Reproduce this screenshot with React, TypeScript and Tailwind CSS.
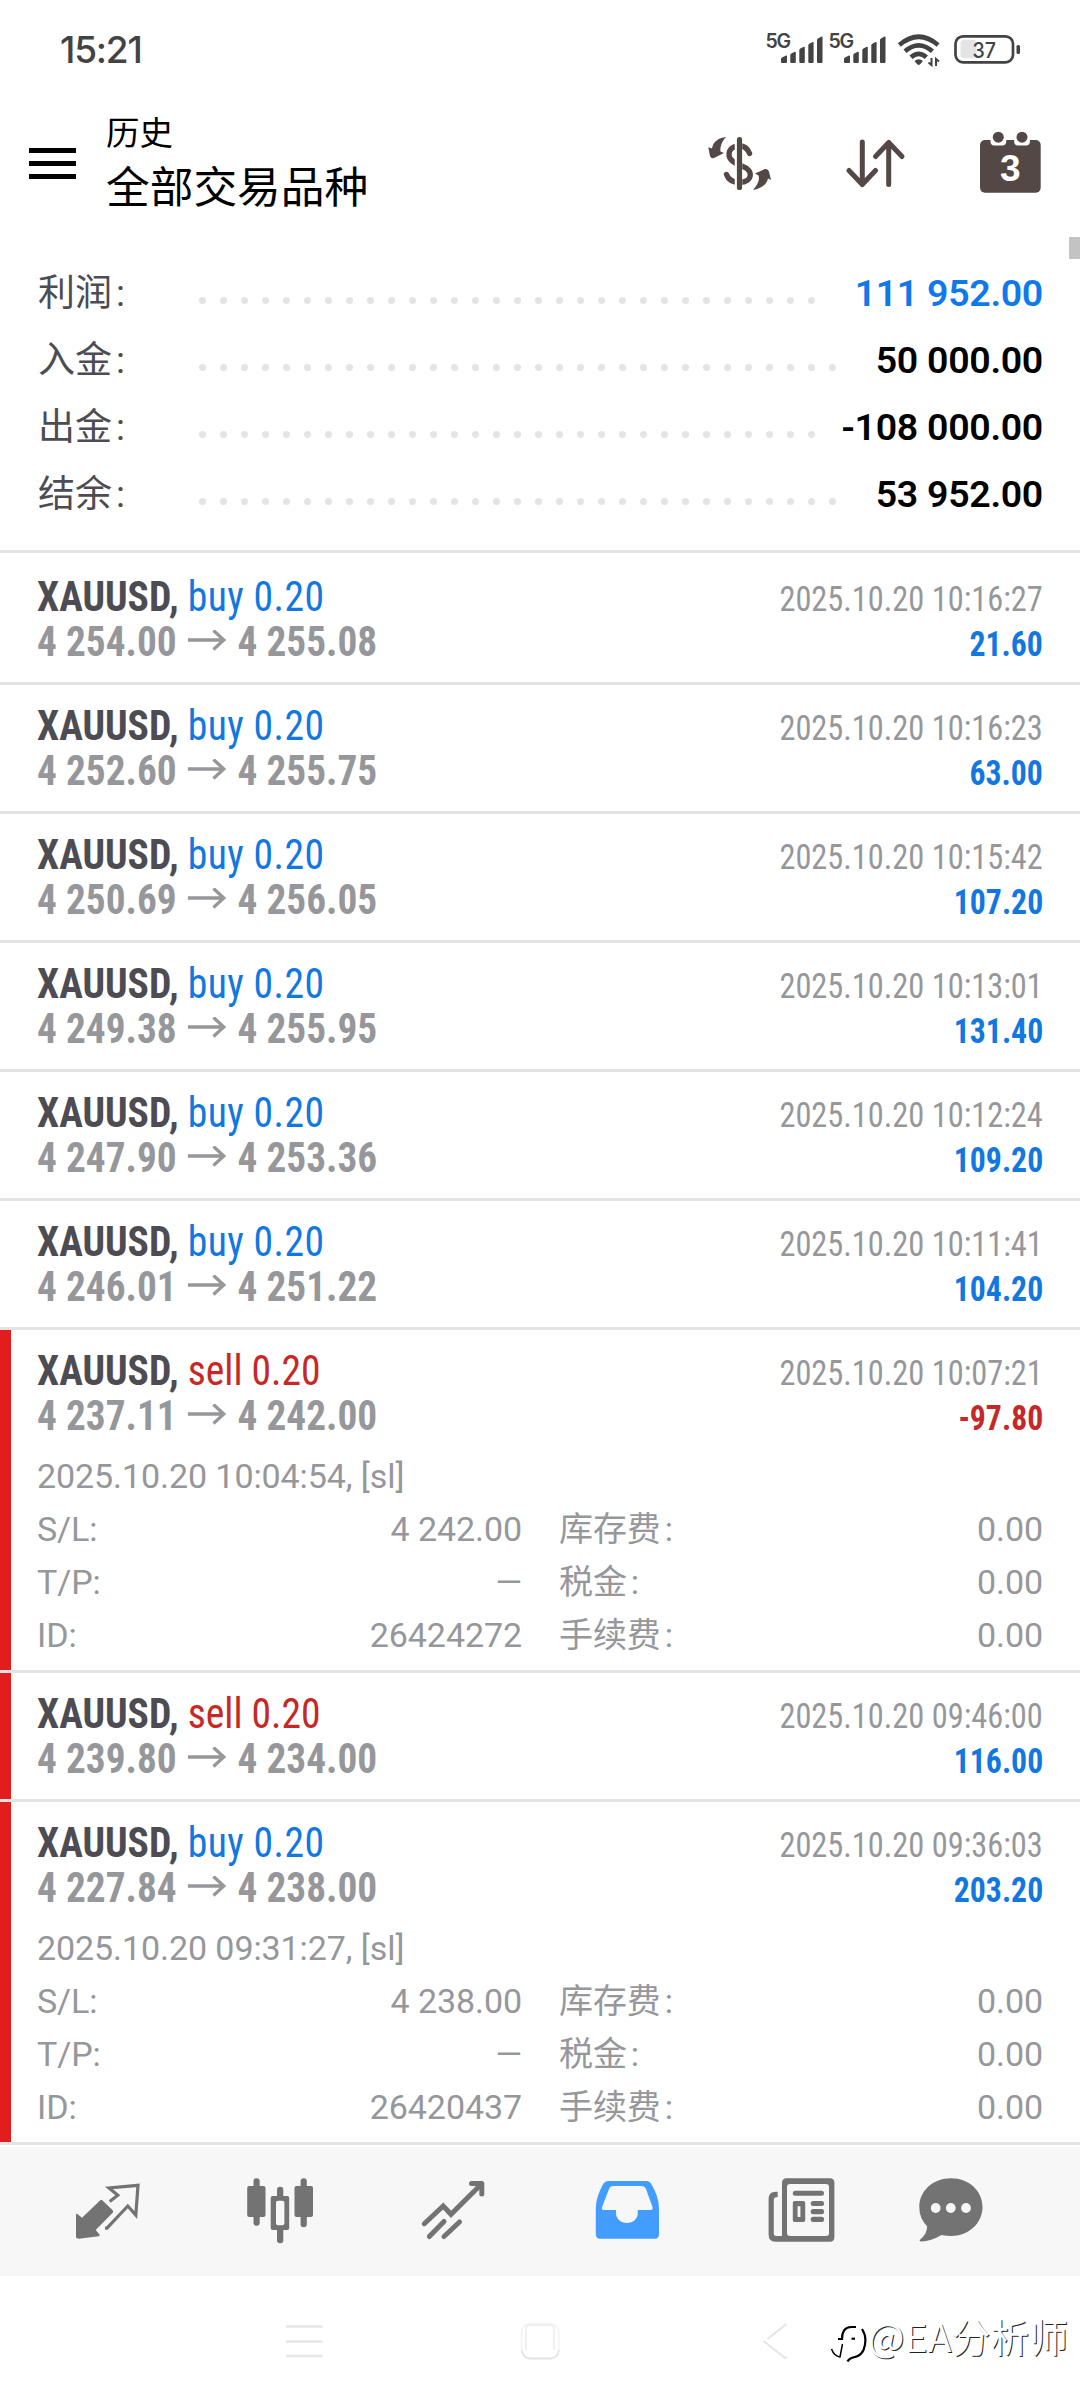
import type { ReactNode } from 'react';

type Trade = {
  side: 'buy' | 'sell';
  open: string;
  close: string;
  time: string;
  profit: string;
  marked?: boolean;
  details?: {
    opened: string;
    sl: string;
    id: string;
  };
};

const trades: Trade[] = [
  { side: 'buy', open: '4 254.00', close: '4 255.08', time: '2025.10.20 10:16:27', profit: '21.60' },
  { side: 'buy', open: '4 252.60', close: '4 255.75', time: '2025.10.20 10:16:23', profit: '63.00' },
  { side: 'buy', open: '4 250.69', close: '4 256.05', time: '2025.10.20 10:15:42', profit: '107.20' },
  { side: 'buy', open: '4 249.38', close: '4 255.95', time: '2025.10.20 10:13:01', profit: '131.40' },
  { side: 'buy', open: '4 247.90', close: '4 253.36', time: '2025.10.20 10:12:24', profit: '109.20' },
  { side: 'buy', open: '4 246.01', close: '4 251.22', time: '2025.10.20 10:11:41', profit: '104.20' },
  {
    side: 'sell',
    open: '4 237.11',
    close: '4 242.00',
    time: '2025.10.20 10:07:21',
    profit: '-97.80',
    marked: true,
    details: { opened: '2025.10.20 10:04:54, [sl]', sl: '4 242.00', id: '26424272' },
  },
  { side: 'sell', open: '4 239.80', close: '4 234.00', time: '2025.10.20 09:46:00', profit: '116.00', marked: true },
  {
    side: 'buy',
    open: '4 227.84',
    close: '4 238.00',
    time: '2025.10.20 09:36:03',
    profit: '203.20',
    marked: true,
    details: { opened: '2025.10.20 09:31:27, [sl]', sl: '4 238.00', id: '26420437' },
  },
];

const summary = [
  { label: '利润', value: '111 952.00', dots: 30, color: 'text-[#0f79ec]' },
  { label: '入金', value: '50 000.00', dots: 31, color: 'text-black' },
  { label: '出金', value: '-108 000.00', dots: 30, color: 'text-black' },
  { label: '结余', value: '53 952.00', dots: 31, color: 'text-black' },
];

function Signal() {
  return (
    <svg width="63" height="40" viewBox="764 30 63 40" fill="#434343">
      <text x="765.5" y="48.2" fontFamily="Inter" fontSize="19.5" fontWeight="600" textLength="25.5">
        5G
      </text>
      <path d="M781 59q0-1 1-1.5l4-2q1-.3 1 .8V62q0 1-1 1h-4q-1 0-1-1z" />
      <path d="M790.3 55q0-1 1-1.5l3.5-1.7q1-.3 1 .8V62q0 1-1 1h-3.5q-1 0-1-1z" />
      <path d="M799.3 50q0-1 1-1.5l3.5-1.7q1-.3 1 .8V62q0 1-1 1h-3.5q-1 0-1-1z" />
      <path d="M808.3 45.3q0-1 1-1.5l3.3-1.7q1-.3 1 .8V62q0 1-1 1h-3.3q-1 0-1-1z" />
      <path d="M817 40q0-1 1-1.6l3.5-1.9q1-.3 1 .8V62q0 1-1 1H818q-1 0-1-1z" />
    </svg>
  );
}

function StatusBar() {
  return (
    <div className="flex h-[100px] items-start justify-between pr-[58px] pl-[60px]">
      <span className="mt-[26px] font-['Inter'] text-[37px] leading-[48px] font-medium tracking-[-1.2px] text-[#434343]">
        15:21
      </span>
      <div className="flex pt-[30px]">
        <Signal />
        <Signal />
        <svg width="60" height="40" viewBox="890 30 60 40" fill="none" stroke="#434343" strokeWidth="4.6">
          <path d="M899.3 45q19.4-16.5 38.8 0" />
          <path d="M905 51.3q13.7-12 27.4 0" />
          <path d="M911 57.3q7.7-7 15.4 0" />
          <path d="M914.5 61q4.2-3.5 8.4 0l-2.7 3.3q-1.5 1.5-3 0z" fill="#434343" stroke="none" />
          <path d="M931.5 58v7l-3-2.5M936 66v-7l3 2.5" strokeWidth="2" />
        </svg>
        <svg width="72" height="40" viewBox="950 30 72 40" fill="none">
          <rect x="960.5" y="39.7" width="16" height="18.5" rx="4" fill="#e4e4e4" />
          <rect x="955.5" y="36.3" width="57.5" height="26" rx="7.5" stroke="#434343" strokeWidth="2.7" />
          <rect x="1016.5" y="45" width="3.5" height="9" rx="1.5" fill="#434343" />
          <text x="972.5" y="58" fill="#434343" fontFamily="Inter" fontSize="22" fontWeight="500" textLength="23.5" lengthAdjust="spacingAndGlyphs">
            37
          </text>
        </svg>
      </div>
    </div>
  );
}

function CurrencyIcon() {
  return (
    <svg width="66" height="56" viewBox="707 136 66 56" fill="none" stroke="#534845">
      <path
        d="M749.6 153.5C747.5 148 743.5 146 739.5 146C733 146 729 149.5 729 154.5C729 160 734 162.5 739.5 165C745.5 167.5 750.3 169.5 750.3 174.5C750.3 179.5 746 182.3 739.5 182.3C733 182.3 728.5 180 726.5 174.5"
        strokeWidth="5.3"
        strokeLinecap="round"
      />
      <path d="M738.5 138V190" stroke="#fff" strokeWidth="7.5" />
      <path d="M739.5 139.5V187.5" strokeWidth="5.2" strokeLinecap="round" />
      <path
        d="M726 137C718 138 713 142 712 148.5L708.3 147.3L710 156Q711 159 714 158L724 153L720.5 151.5C720 147 721.5 142 726 137Z"
        fill="#534845"
        stroke="none"
      />
      <path
        d="M753 190C762 188 767 184 768 178.5L771 180L769 171.5Q768 168.5 765 169L755 173.5L758.5 175.5C760 180 757.5 185 753 190Z"
        fill="#534845"
        stroke="none"
      />
    </svg>
  );
}

function CalendarIcon() {
  return (
    <svg width="62" height="64" viewBox="980 130 62 64">
      <rect x="980" y="140" width="60.7" height="52.7" rx="5" fill="#534845" />
      <rect x="990.5" y="130" width="15.7" height="15.5" rx="4" fill="#fff" />
      <rect x="1014.2" y="130" width="15.7" height="15.5" rx="4" fill="#fff" />
      <circle cx="998.3" cy="137.2" r="5.5" fill="#534845" />
      <circle cx="1022" cy="137.2" r="5.5" fill="#534845" />
      <text x="1010.2" y="181.3" textAnchor="middle" fill="#fff" fontFamily="Liberation Sans" fontSize="37" fontWeight="700">
        3
      </text>
    </svg>
  );
}

function Header() {
  return (
    <header className="flex h-[137px] items-start pr-[38px] pl-[29px]">
      <div className="mt-[48px] flex w-[47px] flex-col gap-[8px]">
        <div className="h-[5px] bg-black" />
        <div className="h-[5px] bg-black" />
        <div className="h-[5px] bg-black" />
      </div>
      <div className="ml-[30px] flex-1 pt-[9px] text-black">
        <div className="text-[33.5px] leading-[50px]">历史</div>
        <div className="text-[43.7px] leading-[59px]">全部交易品种</div>
      </div>
      <div className="flex pt-[30px]">
        <div className="pt-[6px]">
          <CurrencyIcon />
        </div>
        <svg className="mt-[6px] ml-[73px]" width="60" height="56" viewBox="846 136 60 56" fill="none" stroke="#534845" strokeWidth="5" strokeLinecap="round" strokeLinejoin="round">
          <path d="M862.3 142V184.5M849 170.5L862.3 184.5L875.5 170.5" />
          <path d="M888.7 184.5V142.5M875.5 156.5L888.7 142.5L902 156.5" />
        </svg>
        <div className="ml-[74px]">
          <CalendarIcon />
        </div>
      </div>
    </header>
  );
}

function Summary() {
  return (
    <section className="relative h-[313px] pr-[37px] pl-[38px]">
      <div className="absolute top-0 right-0 h-[22px] w-[11px] bg-[#c3c3c3]" />
      <div className="pt-[23px]">
        {summary.map((row) => (
          <div key={row.label} className="flex h-[67px] items-center">
            <div className="w-[161px] text-[37px] leading-[67px] text-[#4d4c52]">
              {row.label}
              <span className="ml-[4px]">:</span>
            </div>
            <div className="mt-[13px] flex gap-[14px]">
              {Array.from({ length: row.dots }, (_, i) => (
                <span key={i} className="size-[7px] rounded-full bg-[#e4e4e4]" />
              ))}
            </div>
            <div className={`ml-auto text-[37.5px] leading-[67px] font-semibold tracking-[-0.3px] ${row.color}`}>{row.value}</div>
          </div>
        ))}
      </div>
    </section>
  );
}

function DetailRow({ label, value, feeLabel }: { label: string; value: string; feeLabel: string }) {
  return (
    <div className="flex h-[53px]">
      <div className="flex w-[485px] justify-between">
        <span>{label}</span>
        <span>{value}</span>
      </div>
      <div className="ml-[37px] flex flex-1 justify-between">
        <span>
          {feeLabel}
          <span className="ml-[4px]">:</span>
        </span>
        <span>0.00</span>
      </div>
    </div>
  );
}

function TradeRow({ trade }: { trade: Trade }) {
  const { details } = trade;
  return (
    <li className="flex border-b-3 border-[#e3e3e3]">
      <div className={trade.marked ? 'w-[11px] bg-[#e01e1e]' : 'w-[11px]'} />
      <div className={details ? 'flex-1 pt-[18px] pr-[37px] pb-[8px] pl-[26px]' : 'flex-1 py-[18px] pr-[37px] pl-[26px]'}>
        <div className="flex h-[45px] items-baseline justify-between leading-[45px] font-stretch-condensed">
          <span className="origin-left scale-x-[0.942] text-[42px]">
            <b className="text-[#4d4c52]">XAUUSD,</b>{' '}
            <span className={trade.side === 'buy' ? 'tracking-[0.45px] text-[#1277e0]' : 'text-[#c62828]'}>{trade.side} 0.20</span>
          </span>
          <span className="origin-right scale-x-[0.938] text-[34.5px] text-[#96979b]">{trade.time}</span>
        </div>
        <div className="flex h-[45px] items-baseline justify-between leading-[45px] font-bold font-stretch-condensed">
          <span className="origin-left scale-x-[0.936] text-[42px] text-[#96979b]">
            {trade.open}
            <svg className="mx-[12px] inline-block align-baseline" width="41" height="26" viewBox="0 0 41 26" fill="none" stroke="#96979b" strokeWidth="3.5">
              <path d="M0 10H39M27.5 0.5L38.5 10L27.5 19.5" />
            </svg>
            {trade.close}
          </span>
          <span
            className={
              trade.profit.startsWith('-')
                ? 'origin-right scale-x-[0.92] text-[34.5px] text-[#c62828]'
                : 'origin-right scale-x-[0.92] text-[34.5px] text-[#1277e0]'
            }
          >
            {trade.profit}
          </span>
        </div>
        {details && (
          <div className="mt-[12px] text-[34px] leading-[53px] tracking-[-0.08px] text-[#96979b]">
            <div>{details.opened}</div>
            <DetailRow label="S/L:" value={details.sl} feeLabel="库存费" />
            <DetailRow label="T/P:" value="—" feeLabel="税金" />
            <DetailRow label="ID:" value={details.id} feeLabel="手续费" />
          </div>
        )}
      </div>
    </li>
  );
}

function Tab({ children, viewBox, className }: { children: ReactNode; viewBox: string; className: string }) {
  return (
    <svg className={className} width="70" height="70" viewBox={viewBox} fill="#737373">
      {children}
    </svg>
  );
}

function TabBar() {
  return (
    <nav className="mt-[2px] flex h-[129px] items-start bg-[#f7f7f7] pt-[28px]">
      <Tab className="ml-[72px]" viewBox="72 2175 70 70">
        <path d="M76 2214.5Q76.5 2213 78 2214.5L82 2217.7L100 2200.5Q101.2 2199 102.5 2200.5L112.5 2210Q114 2211.5 112.5 2213L95.7 2230L99.5 2234.5Q100 2236 98.5 2236.3L79 2238.7Q76 2238.7 76 2236.5Z" />
        <path
          d="M105 2228.2H107L127.8 2206L135.8 2215L138 2185.3L109 2188L117.8 2195.3L109.7 2201.5"
          fill="none"
          stroke="#737373"
          strokeWidth="3.2"
        />
      </Tab>
      <Tab className="ml-[103px]" viewBox="245 2175 70 70">
        <rect x="247.2" y="2186" width="18.3" height="31" rx="2" />
        <rect x="253.5" y="2178.3" width="6.2" height="47.5" rx="3" />
        <rect x="277" y="2186.7" width="6.3" height="56.5" rx="3" />
        <rect x="270.7" y="2196" width="18.5" height="34" rx="2" />
        <rect x="276" y="2200.7" width="8.4" height="24.5" rx="2" fill="#f7f7f7" />
        <rect x="294.5" y="2186" width="18.5" height="31" rx="2" />
        <rect x="300.6" y="2178.3" width="6.2" height="49" rx="3" />
      </Tab>
      <Tab className="ml-[104px]" viewBox="419 2175 70 70">
        <g fill="none" stroke="#737373" strokeWidth="5" strokeLinecap="round">
          <path d="M424.3 2223.8L443.2 2206L451 2214.3L480 2185.5" strokeLinejoin="miter" />
          <path d="M471.5 2183.5H481.8V2194" strokeLinejoin="round" />
          <path d="M429.3 2236.5L444 2221.5M444 2236.5L459.5 2222" />
        </g>
      </Tab>
      <Tab className="ml-[103px]" viewBox="592 2175 70 70">
        <path
          d="M608 2181H647Q649.5 2181 651 2183.5Q659 2197 659 2208V2234Q659 2238.7 655 2238.7H600Q595.8 2238.7 595.8 2234V2208Q595.8 2197 603.5 2183.5Q605 2181 608 2181ZM613.5 2186Q610 2186 609 2189L602.3 2206.5Q601 2210 604 2210H616V2213C616 2219 621 2223 627 2223S637.8 2219 637.8 2213V2210H650.5Q653.6 2210 652.3 2206.5L646 2189Q644.5 2186 641 2186Z"
          fill="#429dff"
          fillRule="evenodd"
        />
      </Tab>
      <Tab className="ml-[104px]" viewBox="766 2175 70 70">
        <path
          d="M786.5 2178.3H830Q834.4 2178.3 834.4 2183V2237Q834.4 2241.7 830 2241.7H775.5Q768.6 2241.7 768.6 2234.5V2199Q768.6 2191.7 775.5 2191.7H777.7V2197Q773.8 2197 773.8 2199.5V2233.5Q773.8 2236 776.5 2236H782V2183Q782 2178.3 786.5 2178.3ZM790 2184Q787 2184 787 2187V2233Q787 2236 790 2236H826Q829 2236 829 2233V2187Q829 2184 826 2184Z"
          fillRule="evenodd"
        />
        <rect x="792.8" y="2190.7" width="31.2" height="5" rx="2.5" />
        <path
          d="M794.5 2201H803.5Q805.2 2201 805.2 2203V2220Q805.2 2222 803.5 2222H794.5Q792.8 2222 792.8 2220V2203Q792.8 2201 794.5 2201ZM797.6 2206.3V2217H800.4V2206.3Z"
          fillRule="evenodd"
        />
        <rect x="810.7" y="2201" width="13.4" height="5" rx="2.5" />
        <rect x="810.7" y="2209" width="13.4" height="5.2" rx="2.5" />
        <rect x="810.7" y="2216.8" width="13.4" height="5.2" rx="2.5" />
      </Tab>
      <Tab className="ml-[80px]" viewBox="916 2175 70 70">
        <path d="M951 2178.3C969 2178.3 982.5 2191 982.5 2207S969 2236 951 2236Q946 2236 941.5 2235Q930 2241.7 920.5 2241.4Q918.8 2241 920 2239.8Q927 2234 927.2 2226.5Q919.3 2218.5 919.3 2207C919.3 2191 933 2178.3 951 2178.3Z" />
        <circle cx="935.7" cy="2208" r="4.9" fill="#f7f7f7" />
        <circle cx="950.8" cy="2208" r="4.9" fill="#f7f7f7" />
        <circle cx="966" cy="2208" r="4.9" fill="#f7f7f7" />
      </Tab>
    </nav>
  );
}

function SystemNav() {
  return (
    <div className="flex h-[124px] items-start pt-[40px]">
      <svg className="ml-[284px]" width="42" height="46" viewBox="284 2316 42 46" fill="none" stroke="#e6e6e6" strokeWidth="2.5">
        <path d="M286 2326.5H322.5M286 2341.5H322.5M286 2356H322.5" />
      </svg>
      <svg className="ml-[193px]" width="44" height="46" viewBox="519 2316 44 46" fill="none">
        <rect x="521.5" y="2323.5" width="37.5" height="35" rx="9" stroke="#f3f3f3" strokeWidth="1.5" />
        <path d="M521.5 2350Q523 2358.5 531 2358.5H550Q558 2358.5 559 2350" stroke="#e4e4e4" strokeWidth="1.8" />
        <path d="M526 2350V2329Q526 2325 530 2325H550Q554 2325 554 2329V2350" stroke="#ececec" strokeWidth="1.5" />
      </svg>
      <svg className="ml-[198px]" width="30" height="46" viewBox="761 2316 30 46" fill="none" stroke="#e4e4e4" strokeWidth="1.8">
        <path d="M786.5 2324L767.5 2339M763.5 2341L785 2358L787 2357" />
      </svg>
      <svg className="-mt-px ml-[38px]" width="40" height="50" viewBox="829 2316 40 50" fill="none" stroke="#000" strokeWidth="2.2">
        <path d="M838 2340H842Q842 2328.5 851 2328H856" />
        <path d="M851.5 2339.7H855" />
        <path d="M862 2330Q868 2339 863.5 2351Q861 2357 853 2358.5Q849 2359.5 847.5 2362.5" />
        <path d="M842.5 2345L840 2358Q834 2357 831.5 2350" strokeWidth="1.5" />
      </svg>
      <span className="-mt-[4px] -ml-px font-['Noto_Sans_CJK_SC'] text-[38.5px] leading-[46px] tracking-[0.4px] whitespace-nowrap text-white text-shadow-[1px_1px_0_#222]">
        @EA分析师
      </span>
    </div>
  );
}

export default function App() {
  return (
    <main className="h-[2400px] w-[1080px] overflow-hidden bg-white font-['Roboto','Noto_Sans_CJK_SC',sans-serif]">
      <StatusBar />
      <Header />
      <Summary />
      <ul className="border-t-3 border-[#e3e3e3] pt-[3px]">
        {trades.map((trade) => (
          <TradeRow key={trade.time} trade={trade} />
        ))}
      </ul>
      <TabBar />
      <SystemNav />
    </main>
  );
}
